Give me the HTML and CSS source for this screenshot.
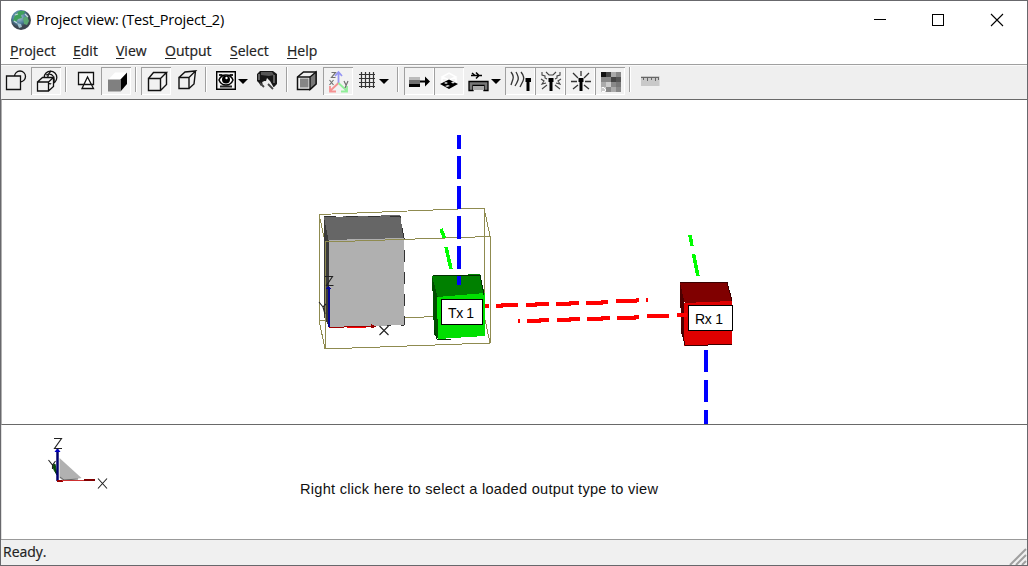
FILE: index.html
```html
<!DOCTYPE html>
<html lang="en">
<head>
<meta charset="utf-8">
<title>Project view: (Test_Project_2)</title>
<link rel="stylesheet" href="styles.css">
</head>
<body>
<div class="window">
  <header class="titlebar">
    <svg class="app-icon" width="22" height="22" viewBox="0 0 22 22">
      <defs><radialGradient id="globe" cx=".4" cy=".35"><stop offset="0" stop-color="#b4cdd6"/><stop offset=".65" stop-color="#4b7d9c"/><stop offset="1" stop-color="#3c4650"/></radialGradient></defs>
      <circle cx="11" cy="11" r="10" fill="url(#globe)"/>
      <path d="M5 6l4-4 6 0-1 3-3 1 1 3-4 1-2 3-3-1z" fill="#3fa05b"/>
      <path d="M13 9l4-2 2 5-2 4-3-1z" fill="#5aa873"/>
      <path d="M7 14l4 1 1 3-3 1z" fill="#9fc0cc"/>
      <path d="M5 6l3-1M15 5l3 3M4 12l3 2" stroke="#c7d8dc" stroke-width="1.3"/>
    </svg>
    <h1 class="title">Project view: (Test_Project_2)</h1>
    <svg class="controls" width="132" height="20" viewBox="0 0 132 20" shape-rendering="crispEdges" fill="none" stroke="#000">
      <path d="M0 9.5h12"/><path d="M58.5 4.5h11v11h-11z"/><path d="M117 4l12 12M129 4l-12 12" shape-rendering="auto" stroke-width="1.1"/>
    </svg>
  </header>
  <nav class="menubar">
    <span class="menu m-project"><u>P</u>roject</span><span class="menu m-edit"><u>E</u>dit</span><span class="menu m-view"><u>V</u>iew</span><span class="menu m-output"><u>O</u>utput</span><span class="menu m-select"><u>S</u>elect</span><span class="menu m-help"><u>H</u>elp</span>
  </nav>
  <div class="toolbar">
    <div class="tool"><svg width="30" height="28" fill="#efefef" stroke="#111" stroke-width="1.3"><circle cx="19" cy="9.500" r="5.500"/><path d="M5.500 9h14v13.500h-14z"/></svg></div>
    <div class="tool on"><svg width="30" height="28" fill="#f2f2f2" stroke="#111" stroke-width="1.300"><circle cx="19.500" cy="10.500" r="6.300"/><path d="M15 8q5-2 7 1t1 7M20 4q-4 4-3 8" fill="none"/><path d="M6.500 15h11v9h-11zM6.500 15l5-4.500h11l-5 4.500M17.500 24l5-4.500v-9"/></svg></div>
    <i class="sep"></i>
    <div class="tool"><svg width="30" height="28" fill="none" stroke="#111" stroke-width="1.300"><path d="M7.500 5.500h15v12h-15z" fill="#fafafa"/><path d="M16.500 10l-5.500 11.500h11.500zM12.500 17.500h8" fill="#fff"/></svg></div>
    <div class="tool on"><svg width="30" height="28"><path d="M7 13l7-7.500h12l-6 7.500z" fill="#fff"/><path d="M19.500 12.500l6.500-7v11.500l-6.500 7.500z"/><path d="M7 12.500h12.500v12H7z" fill="#808080"/></svg></div>
    <i class="sep"></i>
    <div class="tool on"><svg width="30" height="28" fill="none" stroke="#111" stroke-width="1.400"><path d="M7.500 11.500h12v12h-12zM7.500 11.500l5-6h13l-6 6M25.500 5.500v12l-6 6"/></svg></div>
    <div class="tool"><svg width="30" height="28" fill="none" stroke="#111" stroke-width="1.400"><path d="M8 10.500h10v11H8zM8 10.500l6-5.500 10.500-1-6.500 6.500M24.500 4L23 17l-5 4.500"/></svg></div>
    <i class="sep"></i>
    <div class="tool wide"><svg width="41" height="28"><path d="M5.700 4.700h18.600v17.600H5.700z" fill="#f4f4f4" stroke="#000" stroke-width="1.400"/><path d="M8 7h3.500v2H8zM18.500 7H22v2h-3.500zM9 18.500h12v2H9z" fill="#222"/><path d="M8 13q2-5 7-5t7 5q-2 5-7 5t-7-5z" fill="#fff" stroke="#000" stroke-width="1.500"/><circle cx="15" cy="12.500" r="4"/><circle cx="15.500" cy="11" r="1.200" fill="#fff"/><path d="M27 12h10l-5 5z"/></svg></div>
    <div class="tool"><svg width="30" height="28"><path d="M5 7l3-3h13l4 3v10l-3 3h-4l-2-5-4-1-3 5-2-3-2-2z" fill="#171717"/><path d="M9 5h11l2 3-5 1-8-1z" fill="#555"/><path d="M7 7v6M22 8v8" fill="none" stroke="#888" stroke-width="1.300"/><path d="M10 15l4-1 1-3 3 3 4 7-2 2-5-4-1 3z" fill="#eee"/><path d="M16 17l5 5M8 16l4 4" stroke="#444" stroke-width="1.800"/></svg></div>
    <i class="sep"></i>
    <div class="tool axes-gap"><svg width="30" height="28" stroke="#111" stroke-width="1.500"><path d="M5.500 10l6-5h12.500v12l-6 5.500H5.500z" fill="#efefef"/><path d="M8 11.500h8.500v9H8z" fill="#858585" stroke="none"/><path d="M18 10l6-5v12l-6 5.500z" fill="#777" stroke-width="1.300"/><path d="M5.500 10H18" fill="none"/></svg></div>
    <div class="tool on"><svg width="30" height="28" fill="none" stroke-width="1.800"><path d="M15.500 16V6M12 9l3.500-4 3.500 4" stroke="#9696f4"/><path d="M15.500 16L7 24M7 19v5.500h6" stroke="#f59292"/><path d="M15.500 16l8.500 8M18 24.500h6V19" stroke="#91ee99"/><g stroke="#707070" stroke-width="1.200"><path d="M8.500 5.500h4l-4 5h4M6.500 13l4 5M10.500 13l-4 5M21 14l2 4M25 14l-3 7"/></g></svg></div>
    <div class="tool wide"><svg width="40" height="28"><path d="M8.500 5v16M12.500 5v16M16.500 5v16M20.500 5v16M6 7.500h16M6 11.500h16M6 15.500h16M6 19.500h16" stroke="#333" stroke-width="1.200"/><path d="M26 12h10l-5 5z"/></svg></div>
    <i class="sep late"></i>
    <div class="tool on"><svg width="30" height="28"><path d="M5 10h11v3H5z" fill="#bbb"/><path d="M5 13h11v4H5z" fill="#707070"/><path d="M5 17h11v3H5z"/><path d="M16 13.500h5V9.500l5 5-5 5v-4h-5z"/></svg></div>
    <div class="tool on"><svg width="30" height="28"><path d="M8 10l7-4 7 4-7 3zM8 10v6M22 10v6" fill="none" stroke="#fff" stroke-width="1.500"/><path d="M6 17l9-4.500 9 4.500-9 5z"/><path d="M10 16l2-1 2 1-2 1zM17 15.500l2-1 2 1-2 1zM11 19l3-1 2 1-3 1z" fill="#ddd"/></svg></div>
    <div class="tool wide"><svg width="41" height="28"><path d="M5 14.500h19v9h-4v-5H9v5H5z" fill="#777" stroke="#000" stroke-width="1.300"/><path d="M9 19h11v4H9z" fill="#aaa"/><path d="M7 8.500h11M8 6l3 2.500M12 5.500l3 3-3 3" fill="none" stroke="#000" stroke-width="1.500"/><path d="M27 12h10l-5 5z"/></svg></div>
    <div class="tool on"><svg width="30" height="28"><path d="M6 5q3 4 2 7t-2 6M11 5q3 5 2 8t-3 6M16 5q4 5 2 9t-3 6" fill="none" stroke="#333" stroke-width="1.300"/><path d="M20.500 11h5.500v4h-1.500v9h-3v-9h-1z"/></svg></div>
    <div class="tool on"><svg width="30" height="28"><path d="M7 5v3l3 1v2l2 1M25 5v3l-3 1v2l-2 1M6 12l3 2-2 3 4-1M26 12l-3 2 2 3-4-1M7 22l5-4M25 22l-5-4M11 5l3 3h4l3-3" fill="none" stroke="#444" stroke-width="1.100"/><path d="M13.500 11h5v4H17.500v9h-3v-9h-1z"/></svg></div>
    <div class="tool on"><svg width="30" height="28"><path d="M16 4v5M8 6l5 5M24 6l-5 5M6 14.500h6M20 14.500h6M8 22l5-4M24 22l-5-4" stroke="#333" stroke-width="1.300"/><path d="M13.500 11h5v4H17.500v9h-3v-9h-1z"/></svg></div>
    <div class="tool on"><svg width="30" height="28" shape-rendering="crispEdges"><path d="M6 5h20v20H6z" fill="#888"/><path d="M6 5h5v5H6z" fill="#111"/><path d="M11 5h5v5h-5zM16 10h5v5h-5z" fill="#444"/><path d="M21 15h5v5h-5z" fill="#777"/><path d="M16 5h5v5h-5zM6 15h5v5H6zM16 20h5v5h-5z" fill="#aaa"/><path d="M21 10h5v5h-5z" fill="#555"/><path d="M6 20h5v5H6zM11 15h5v5h-5z" fill="#ccc"/><path d="M7 21q4-1 3 3H7" fill="none" stroke="#fff"/></svg></div>
    <i class="sep"></i>
    <div class="tool"><svg width="30" height="28"><path d="M6 9h18.500v10H6z" fill="#c9c9c9"/><path d="M6 10.500h18M8.500 10v3M12.500 10v4M16.500 10v3M20.500 10v4M23.500 10v3" stroke="#666"/></svg></div>
  </div>

  <main class="scene">
    <svg width="1025" height="324" viewBox="2 100 1025 324" shape-rendering="crispEdges">
      <g fill="none" stroke="#8f8b50"><path d="M319 214.500L484 208M319 214v106.500L484 315M484 208v107M319 214l6 28M484 208l6 28M319 320l6 29M484 315l6 28"/></g>
      <path d="M324 218l5 23v86l-5-10z" fill="#3a3a3a"/>
      <path d="M324 217l76-2 4 24-75 3z" fill="#666"/>
      <path d="M328.500 240l75.500-2v87l-75.500 3z" fill="#b0b0b0"/>
      <path d="M324 217l17-1h59l4 22v87l-17 .500" fill="none" stroke="#333" stroke-dasharray="12 10"/>
      <path d="M325 242l165-5.500v106.500l-165 6z" fill="none" stroke="#8f8b50"/>
      <path d="M328.500 327v-40" stroke="#080894" stroke-width="2"/><path d="M326 289h5l-2.500-4z" fill="#080894"/>
      <path d="M329 327.500l46-1.500" stroke="#a00000"/><path d="M347 327h19" stroke="#f00"/><path d="M371 324l5 2.500-5 2z" fill="#900"/>
      <g shape-rendering="auto" fill="none" stroke="#222" stroke-width="1.100"><path d="M325 276.500h7.500l-6 9h7M319 302l4 5 3-3M323 307l2 7M379.500 326l9 9M388.500 326l-9 9"/></g>
      <path d="M432 276l6 20v42l-4-3z" fill="#004e00"/><path d="M432 276l48-2 5 22-47 2z" fill="#008000"/><path d="M437 297l48-4v43l-47 3z" fill="#00e000"/><path d="M433 276l15-1h32l4 20M434 330l3 9h14" fill="none" stroke="#003000"/>
      <g fill="none" stroke="#00fd00" stroke-width="3.500"><path d="M441 229l3.500 9M446 247l5 22M690 235l2 11M693.500 254l4.500 22"/></g>
      <path d="M459 135v14M459 156v23M459 186v23M459 216v23M459 246v23M459 276v9" stroke="#00f" stroke-width="4"/>
      <path d="M485 306h3.500M496 305.500h6l1-1h15M526 304.500h10l1-1h12M556 303.500h14l1-1h8M586 302.500h16l1-1h5M616 301h20l1-1h2M646 299.500h1.500M518 321h1.500M527 320.500h13l1-1h8M557 319.500h13l1-1h9M587 318.500h15l1-1h7M617 317.500h18l1-1h3M647 316h22" fill="none" stroke="#f00" stroke-width="4"/>
      <path d="M680 283l4 16 1 46-4-13z" fill="#4d0000"/><path d="M680 283l16-1h31l5 20-47 2z" fill="#800000"/><path d="M684 303l48-2v43l-48 2z" fill="#df0000"/><path d="M680 283l16-1h31l5 19M681 328l4 17h23l24-1" fill="none" stroke="#390000"/>
      <path d="M677 314.500h10" stroke="#f00" stroke-width="4"/>
      <path d="M706 350v22M706 380v22M706 410v14" stroke="#00f" stroke-width="4"/>
      <path d="M441.500 299.500h41v25h-41zM688.500 305.500h44v25h-44z" fill="#fff" stroke="#000" stroke-width="1.200"/>
      <text class="tag" x="448" y="317.500" textLength="26">Tx 1</text><text class="tag" x="695" y="323.500" textLength="28">Rx 1</text>
    </svg>
  </main>
  <section class="output">
    <svg width="1025" height="114" viewBox="2 425 1025 114">
      <path d="M59.500 458l22 20-18 3-4-3z" fill="#b1b1b1"/><path d="M60 477l4 3 14-1" stroke="#666" fill="none"/>
      <path d="M53 465l2-1 2 11-3-5z" fill="#005000" stroke="#0b420b"/>
      <path d="M57.500 481v-31" stroke="#00006e" stroke-width="2.500"/><path d="M54.500 452l3-4 3 4z" fill="#0000c0"/>
      <path d="M57 481h6" stroke="#900" stroke-width="2"/><path d="M62 480.500h29" stroke="#ce3030"/><path d="M84 480h11" stroke="#800000" stroke-width="2"/>
      <g fill="none" stroke="#222" stroke-width="1.100"><path d="M54 438.500h7.500l-7 10H62M48.500 460l4 5 3-4M52.500 465v4M98 478.500l9 10M107 478.500l-9 10"/></g>
      <text class="hint" x="300" y="493.500" textLength="358">Right click here to select a loaded output type to view</text>
    </svg>
  </section>
  <footer class="status"><span class="ready">Ready.</span>
    <svg width="18" height="18" viewBox="0 0 18 18" stroke="#a0a0a0" stroke-width="2"><path d="M1 17L17 1M7 17L17 7M13 17l4-4"/></svg>
  </footer>
</div>
</body>
</html>
```

FILE: styles.css
```css
* { box-sizing: border-box; }
body { margin: 0; font-family: "Open Sans", "Noto Sans", sans-serif; color: #000; }
.window { width: 1028px; height: 566px; background: #fff; border: 1px solid #68686c; display: flex; flex-direction: column; overflow: hidden; }
.titlebar { height: 38px; flex: none; display: flex; align-items: center; padding-left: 9px; }
.app-icon { flex: none; margin-right: 4px; }
.title { margin: 0; font-size: 14.5px; line-height: 36px; font-weight: 400; letter-spacing: -0.2px; white-space: nowrap; }
.controls { margin-left: auto; margin-right: 21px; }
.menubar { height: 25px; flex: none; display: flex; padding-left: 9px; font-size: 14px; line-height: 24px; color: #222; -webkit-text-stroke: 0.2px #222; }
.menu { letter-spacing: 0; white-space: nowrap; }
.menu u { text-underline-offset: 2px; text-decoration-thickness: 1px; text-decoration-skip-ink: none; }
.m-project { width: 63px; }
.m-edit { width: 43px; }
.m-view { width: 49px; }
.m-output { width: 65px; }
.m-select { width: 57px; }
.toolbar { height: 35px; flex: none; display: flex; padding-top: 2px; background: #efefef; border-top: 1px solid #a0a0a0; box-shadow: inset 0 1px #fafafa; }
.tool { width: 30px; height: 28px; flex: none; }
.tool.wide { width: 41px; }
.axes-gap { width: 31px; }
.tool svg { display: block; }
.on { background: #f2f2f2; box-shadow: inset 1px 1px #a0a0a0, inset -1px -1px #fff; }
.sep { width: 10px; height: 25px; flex: none; background: linear-gradient(90deg, transparent 4px, #a0a0a0 4px, #a0a0a0 5px, #fff 5px, #fff 6px, transparent 6px); }
.sep.late { margin-left: -1px; margin-right: 1px; }
.scene { height: 326px; flex: none; border-top: 1px solid #696969; border-bottom: 1px solid #696969; border-left: 1px solid #b0b0b0; overflow: hidden; }
.scene svg, .output svg { display: block; }
.tag { font: 14px "Liberation Sans", sans-serif; }
.hint { font: 14.6px "Liberation Sans", sans-serif; fill: #111; }
.output { height: 114px; flex: none; border-left: 1px solid #e0e0e0; }
.status { height: 27px; flex: none; display: flex; justify-content: space-between; align-items: flex-end; background: #f0f0f0; border-top: 1px solid #999; padding-left: 2px; }
.ready { font-size: 14px; line-height: 28px; height: 28px; letter-spacing: 0; color: #222; -webkit-text-stroke: 0.2px #222; }
```
